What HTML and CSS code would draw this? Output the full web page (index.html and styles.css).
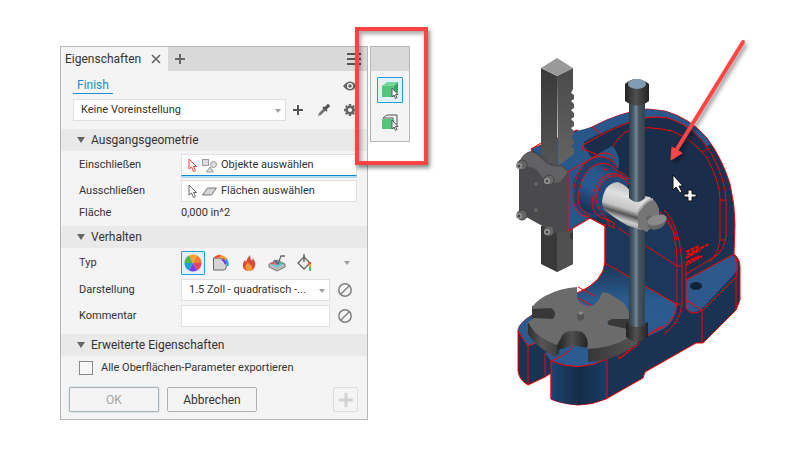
FILE: index.html
```html
<!DOCTYPE html>
<html lang="de">
<head>
  <meta charset="UTF-8">
  <meta name="viewport" content="width=device-width, initial-scale=1.0">
  <title>Eigenschaften</title>
  <link rel="stylesheet" href="styles.css">
</head>
<body>

  <main class="workspace">

    <form class="panel">
      <!-- Tab bar -->
      <div class="tabs">
        <div class="tab">
          <span>Eigenschaften</span>
          <button type="button" class="icon-btn" aria-label="Schließen">
            <svg width="10" height="10" viewBox="0 0 10 10"><path d="M1 1l8 8M9 1L1 9" stroke="#666" stroke-width="1.7"/></svg>
          </button>
        </div>
        <button type="button" class="icon-btn tab-add" aria-label="Neu">
          <svg width="10" height="10" viewBox="0 0 10 10"><path d="M5 0v10M0 5h10" stroke="#666" stroke-width="2"/></svg>
        </button>
        <button type="button" class="icon-btn tab-menu" aria-label="Menü">
          <svg width="14" height="12" viewBox="0 0 14 12"><path d="M0 1h14M0 6h14M0 11h14" stroke="#555" stroke-width="2"/></svg>
        </button>
      </div>

      <div class="crumbs">
        <a href="#" class="crumb">Finish</a>
        <button type="button" class="icon-btn" aria-label="Sichtbarkeit">
          <svg width="14" height="10" viewBox="0 0 14 10"><path d="M0 5Q7-4 14 5Q7 14 0 5Z" fill="#666"/><circle cx="7" cy="5" r="3" fill="#f4f4f4"/><circle cx="7" cy="5" r="1.8" fill="#666"/></svg>
        </button>
      </div>

      <div class="preset">
        <div class="select-box">
          <select aria-label="Voreinstellung"><option>Keine Voreinstellung</option></select>
        </div>
        <button type="button" class="icon-btn" aria-label="Voreinstellung hinzufügen">
          <svg width="10" height="10" viewBox="0 0 10 10"><path d="M5 0v10M0 5h10" stroke="#555" stroke-width="2"/></svg>
        </button>
        <button type="button" class="icon-btn" aria-label="Pipette">
          <svg width="13" height="13" viewBox="0 0 13 13"><path d="M1 12l1-3 5-5 2 2-5 5z" fill="#777"/><path d="M6 3l4 4M8 4l3-3 1 1-3 3z" stroke="#555" stroke-width="1.8"/></svg>
        </button>
        <button type="button" class="icon-btn" aria-label="Einstellungen">
          <svg width="12" height="12" viewBox="0 0 12 12"><circle cx="6" cy="6" r="3.3" fill="none" stroke="#666" stroke-width="2.4"/><path d="M6 0v2M6 10v2M0 6h2M10 6h2M1.8 1.8l1.4 1.4M8.8 8.8l1.4 1.4M1.8 10.2l1.4-1.4M8.8 3.2l1.4-1.4" stroke="#666" stroke-width="2.4"/></svg>
        </button>
      </div>

      <!-- Ausgangsgeometrie -->
      <h2 class="section">Ausgangsgeometrie</h2>
      <div class="rows geometry">
        <div class="row">
          <label for="include">Einschließen</label>
          <button type="button" id="include" class="picker active">
            <svg width="30" height="15" viewBox="0 0 30 15">
              <path d="M2 1v10l2.500-2 2 4.500 2-1-2-4h3z" fill="#fff" stroke="#e8413c"/>
              <rect x="15.500" y="1.500" width="6" height="6" fill="#ddd" stroke="#999"/><circle cx="26.500" cy="6.500" r="3" fill="#ddd" stroke="#999"/><path d="M19.500 14l3.500-5 3.500 5z" fill="#ddd" stroke="#999"/>
            </svg>
            <span>Objekte auswählen</span>
          </button>
        </div>
        <div class="row">
          <label for="exclude">Ausschließen</label>
          <button type="button" id="exclude" class="picker">
            <svg width="30" height="15" viewBox="0 0 30 15">
              <path d="M2 1v10l2.500-2 2 4.500 2-1-2-4h3z" fill="#fff" stroke="#666"/>
              <path d="M15.500 11l5-7h9l-5 7z" fill="#d5d5d5" stroke="#777"/>
            </svg>
            <span>Flächen auswählen</span>
          </button>
        </div>
        <div class="row">
          <span>Fläche</span>
          <output>0,000 in^2</output>
        </div>
      </div>

      <!-- Verhalten -->
      <h2 class="section">Verhalten</h2>
      <div class="rows behavior">
        <div class="row">
          <span>Typ</span>
          <div class="types">
            <button type="button" class="type selected" aria-label="Darstellung">
              <svg width="18" height="18" viewBox="0 0 18 18">
                <path d="M9 9L5 1.500A8.500 8.500 0 0 1 13 1.500Z" fill="#f9a32b"/>
                <path d="M9 9L13 1.500A8.500 8.500 0 0 1 17.500 9Z" fill="#f07e32"/>
                <path d="M9 9H17.500A8.500 8.500 0 0 1 13 16.500Z" fill="#e8475a"/>
                <path d="M9 9L13 16.500A8.500 8.500 0 0 1 5 16.500Z" fill="#7440e8"/>
                <path d="M9 9L5 16.500A8.500 8.500 0 0 1 .5 9Z" fill="#17a5c8"/>
                <path d="M9 9H.5A8.500 8.500 0 0 1 5 1.500Z" fill="#56b450"/>
              </svg>
            </button>
            <button type="button" class="type" aria-label="Beschichtung">
              <svg width="18" height="18" viewBox="0 0 18 18">
                <path d="M1.500 4h5q7 1 8 9l-2 3h-11z" fill="#d5d5d5" stroke="#666"/>
                <path d="M3 4Q5 1.500 9 2" fill="none" stroke="#e84b3c" stroke-width="2.500"/><path d="M8 2.500Q12 3 14 6" fill="none" stroke="#f59a23" stroke-width="3"/><path d="M10 5q3 2 4 5" fill="none" stroke="#7440e8" stroke-width="2.500"/><path d="M14 5q2 3 2 7" fill="none" stroke="#22a8c8" stroke-width="2"/>
              </svg>
            </button>
            <button type="button" class="type" aria-label="Wärmebehandlung">
              <svg width="18" height="18" viewBox="0 0 18 18">
                <path d="M8 17Q2 16 3 10Q3 8 5 6L6 8Q7 4 10 1Q10 5 12 7L13 4Q16 9 15 12Q14 17 8 17Z" fill="#dd4a38"/>
                <path d="M8 17Q4 15 6 11L8 8Q9 11 11 11Q14 15 10 17Z" fill="#f79a35"/>
              </svg>
            </button>
            <button type="button" class="type" aria-label="Bearbeitung">
              <svg width="18" height="18" viewBox="0 0 18 18">
                <path d="M1 10l8-4 8 4v3l-8 4-8-4z" fill="#b9b9b9" stroke="#777"/>
                <path d="M2 10l4-2 3 3z" fill="#e5554e"/><path d="M6 8l3-1.500 1 4z" fill="#7640e8"/><path d="M9 7l7 3-6 1z" fill="#41bfa0"/><path d="M2 10l7 3.500 7-3.500-7 1z" fill="#65c6e8"/>
                <path d="M6 6l4 4 3-8h4" fill="none" stroke="#666" stroke-width="1.300"/>
              </svg>
            </button>
            <button type="button" class="type" aria-label="Farbe">
              <svg width="18" height="18" viewBox="0 0 18 18">
                <path d="M2 9l6-6 6 6-6 6z" fill="#eee" stroke="#666" stroke-width="1.300"/><path d="M8 0v8" stroke="#555" stroke-width="1.300"/>
                <path d="M12 8l3 0v3h-2z" fill="#ef493c"/><path d="M13 10h2v3h-2z" fill="#f3a52b"/><path d="M13 13h2v4h-2z" fill="#4dc574"/>
              </svg>
            </button>
            <i class="arrow"></i>
          </div>
        </div>
        <div class="row">
          <label for="look">Darstellung</label>
          <div class="field">
            <div class="select-box">
              <select id="look"><option>1.5 Zoll - quadratisch -...</option></select>
            </div>
            <button type="button" class="icon-btn" aria-label="Darstellung zurücksetzen">
              <svg width="14" height="14" viewBox="0 0 14 14"><circle cx="7" cy="7" r="6.200" fill="none" stroke="#808080" stroke-width="1.500"/><path d="M3 11l8-8" stroke="#808080" stroke-width="1.500"/></svg>
            </button>
          </div>
        </div>
        <div class="row">
          <label for="comment">Kommentar</label>
          <div class="field">
            <input type="text" id="comment" class="text">
            <button type="button" class="icon-btn" aria-label="Kommentar löschen">
              <svg width="14" height="14" viewBox="0 0 14 14"><circle cx="7" cy="7" r="6.200" fill="none" stroke="#808080" stroke-width="1.500"/><path d="M3 11l8-8" stroke="#808080" stroke-width="1.500"/></svg>
            </button>
          </div>
        </div>
      </div>

      <!-- Erweiterte Eigenschaften -->
      <h2 class="section">Erweiterte Eigenschaften</h2>
      <label class="check">
        <input type="checkbox">
        <span>Alle Oberflächen-Parameter exportieren</span>
      </label>

      <div class="actions">
        <button type="submit" class="btn btn-ok" disabled>OK</button>
        <button type="button" class="btn">Abbrechen</button>
        <button type="button" class="btn btn-plus" aria-label="Anwenden" disabled>
          <svg width="16" height="16" viewBox="0 0 16 16"><path d="M8 1v14M1 8h14" stroke="#d2d2d2" stroke-width="3"/></svg>
        </button>
      </div>
    </form>

    <!-- Selection mode bar -->
    <div class="modes">
      <div class="modes-head"></div>
      <button type="button" class="mode selected" aria-label="Körper">
        <svg width="18" height="18" viewBox="0 0 18 18">
          <path d="M1 5l5-4h11l-4 4z" fill="#75d898"/><path d="M13 5l4-4v10l-4 5z" fill="#35a565"/><rect x="1" y="5" width="12" height="11" fill="#55c57e"/>
          <path d="M11 7v9l2-2 1.500 3.500 1.500-1-1.500-3H17z" fill="#fff" stroke="#555"/>
        </svg>
      </button>
      <button type="button" class="mode" aria-label="Fläche">
        <svg width="18" height="18" viewBox="0 0 18 18">
          <path d="M2 5l4-3h10v10l-4 4V5z" fill="#eee" stroke="#555"/><rect x="1" y="6" width="12" height="10" fill="#55c57e"/>
          <path d="M11 7v9l2-2 1.500 3.500 1.500-1-1.500-3H17z" fill="#fff" stroke="#555"/>
        </svg>
      </button>
      <div class="callout"></div>
    </div>

    <!-- Arbor press model -->
    <div class="viewport">
      <svg class="model" viewBox="500 30 260 390" role="img" aria-label="Dornpresse">
        <defs>
          <linearGradient id="rod"><stop offset="0" stop-color="#303e49"/><stop offset=".3" stop-color="#4c6070"/><stop offset=".45" stop-color="#74899a"/><stop offset=".6" stop-color="#465560"/><stop offset="1" stop-color="#34424d"/></linearGradient>
          <linearGradient id="knob"><stop offset="0" stop-color="#222"/><stop offset=".45" stop-color="#505050"/><stop offset="1" stop-color="#242424"/></linearGradient>
          <linearGradient id="chrome" x1=".65" y1=".1" x2=".35" y2="1"><stop offset="0" stop-color="#bbb"/><stop offset=".25" stop-color="#e0e0e0"/><stop offset=".5" stop-color="#c4c4c4"/><stop offset=".62" stop-color="#555"/><stop offset=".75" stop-color="#ccc"/><stop offset="1" stop-color="#555"/></linearGradient>
          <linearGradient id="rackL" x2="0" y2="1"><stop offset="0" stop-color="#393939"/><stop offset="1" stop-color="#555"/></linearGradient>
          <linearGradient id="rackR" x2="0" y2="1"><stop offset="0" stop-color="#4a4a4a"/><stop offset="1" stop-color="#646464"/></linearGradient>
          <linearGradient id="boss" x1=".1" y1="1" x2=".7" y2="0"><stop offset="0" stop-color="#142c4c"/><stop offset=".45" stop-color="#285a92"/><stop offset=".75" stop-color="#285688"/><stop offset="1" stop-color="#1a3860"/></linearGradient>
          <linearGradient id="foot"><stop offset="0" stop-color="#1d4474"/><stop offset=".5" stop-color="#152b46"/><stop offset="1" stop-color="#1b3d66"/></linearGradient>
          <linearGradient id="web" x2="0" y2="1"><stop offset="0" stop-color="#1a3555"/><stop offset=".35" stop-color="#2b5a8e"/><stop offset="1" stop-color="#2b5b90"/></linearGradient>
          <linearGradient id="side"><stop offset="0" stop-color="#2e2e2e"/><stop offset=".12" stop-color="#555"/><stop offset=".25" stop-color="#444"/><stop offset=".28" stop-color="#2c2c2c"/><stop offset=".4" stop-color="#555"/><stop offset=".52" stop-color="#333"/><stop offset=".6" stop-color="#3a3a3a"/><stop offset="1" stop-color="#555"/></linearGradient>
          <filter id="shadow" x="-20%" y="-20%" width="150%" height="150%"><feDropShadow dx="2" dy="3" stdDeviation="2" flood-opacity=".45"/></filter>
        </defs>

        <!-- Casting silhouette -->
        <path d="M531 149L577 130L580 132L592 127Q620 112 647 109L665 111Q690 118 707 138Q722 158 730 184Q735 205 735 225L734 254Q740 259 740 267V300L736 310L703 343L696 343L645 372L643 378L606 399Q592 405 578 405Q558 403 551 399V373L545 377L528 385Q519 380 518 371V330Q519 323 532 315L577 293Q605 281 605 262V226L590 218L568 231Z" fill="#1a3352" stroke="#f00"/>
        <!-- Rim and dome face -->
        <path d="M531 149L577 131L592 127Q620 112 647 109L665 111Q695 121 711 144L703 148Q690 125 668 118Q640 112 583 142L615 160L568 173Z" fill="#2a5789"/>
        <path d="M583 145Q630 113 668 119Q695 126 711 153Q726 180 726 202V236Q725 250 712 258L686 274V266Q683 230 662 212L600 170Z" fill="#1a2d4a"/>
        <g fill="none" stroke="#f00">
          <path d="M592 127L602 134M583 145Q607 130 632 121Q650 115 668 118Q695 126 711 153Q726 180 726 202V236Q725 248 716 256L686 274"/>
          <path d="M611 150Q619 134 630 130Q646 125 672 131Q694 140 707 158Q720 182 720 200V238Q719 252 710 262M720 200h6M720 240h6M703 152l5-4"/>
        </g>

        <!-- Web between column and base -->
        <path d="M605 222L620 221L658 211Q677 224 678 266V304L605 263Z" fill="#1b3759"/>
        <path d="M605 263L677 304Q676 325 657 332L607 358Q580 374 551 360L555 352Q574 343 572 334L528 346L518 331Q518 323 532 315L577 293Q603 282 605 263Z" fill="url(#web)"/>
        <path d="M686 280L733 255Q739 260 738 270L703 308Q692 316 686 308Z" fill="#2c588b"/>
        <ellipse cx="696" cy="286" rx="6" ry="4" fill="#102238"/>
        <path d="M551 361Q579 374 607 358V398Q578 411 551 399Z" fill="url(#foot)"/>
        <path d="M545 353L572 339Q575 350 551 361V373L545 376Z" fill="#2b5a8e"/>
        <path d="M545 353L551 361V373L545 376Z" fill="#173458"/>
        <g fill="none" stroke="#f00">
          <path d="M605 224V262Q604 281 578 293M605 263L678 305M618 228L677 266M660 212Q677 222 677 266V304Q674 325 657 330L619 351V359L640 343"/>
          <path d="M664 210Q680 225 682 266V304Q680 323 664 334M656 212Q674 226 677 240M677 266h5M677 304h5"/>
          <path d="M686 280L734 254Q739 262 736 277L703 310Q691 317 686 308M686 262V308M686 300l16 10v33M736 277v33"/>
          <path d="M551 361V399M607 360V398M528 346V385M545 353V376M518 331L528 346L537 342M551 361Q579 373 607 359L640 340L662 326M578 287l17 9M578 298l16 9M573 343Q574 352 551 361"/>
          <path d="M619 359L638 342M619 353L636 341"/>
        </g>
        <g stroke="#f00" stroke-width="2">
          <path d="M686 252l13-6M687 255l22-11M686 258l14-8" stroke-dasharray="4 1"/><path d="M686 265l16-9M687 262l12-6" stroke-dasharray="3 1"/>
        </g>

        <!-- Index plate -->
        <path d="M528 322V334Q535 346 555 357L559 353Q559 340 573 336Q588 340 588 348V362Q614 361 637 344V326Z" fill="url(#side)"/>
        <path d="M532 306L553 304L560 313L554 320L532 320ZM608 316H630V330H608Z" fill="#383838"/>
        <path d="M558 350Q560 335 573 331Q588 331 588 342V348Q572 344 565 348Z" fill="url(#knob)"/>
        <path d="M577 287V298Q581 306 590 306Q598 305 602 293Q605 290 618 299Q627 304 629 313V319L612 319Q604 322 609 325L628 329V338Q612 348 587 349Q590 338 582 332Q564 328 561 338L557 345Q535 337 528 322L534 318L553 319Q558 312 551 308L532 309Q533 303 545 296Q560 288 577 287Z" fill="#6b6b6c"/>
        <path d="M577 313l4-2 3 2v6l-4 2-3-2z" fill="#555"/><path d="M577 313l4-2 3 2-3 2z" fill="#888"/>

        <!-- Rack -->
        <path d="M541 226h32v38l-16 8-16-8z" fill="#393939"/><path d="M557 228h16v4l-3 2v4l3 2v24l-16 8z" fill="#505050"/>
        <path d="M541 68l16 8v89l-16-4z" fill="url(#rackL)"/>
        <path d="M568 171L612 146Q620 153 619 166L588 219L568 231Z" fill="#285687"/>
        <path d="M557 76l16-8V89l-2 4 3 2v4l-3 2 3 3v4l-3 2 3 3v4l-3 2 3 3v4l-3 2 3 3v4l-3 2 3 3v4l-3 2 3 3v5l-16 12z" fill="url(#rackR)"/>
        <path d="M557 58l16 10-16 8-16-8z" fill="#999"/>

        <!-- Shaft boss -->
        <path d="M573 183Q581 160 598 157Q615 155 618 170L610 215L592 218Q570 214 573 183Z" fill="#1d406c"/>
        <path d="M578 200Q578 180 590 168Q603 158 617 171L629 179L602 213Q582 216 578 200Z" fill="url(#boss)"/>
        <path d="M596 199Q600 176 615 175Q624 174 630 183L606 212Q595 210 596 199Z" fill="#214a7b"/>
        <g fill="none" stroke="#f00">
          <path d="M531 149l10-6M566 173L592 158Q606 147 616 159M583 145l-1 4 14 5M568 171v60l22-13 15 8"/>
          <path d="M588 217Q573 215 573 195Q574 176 585 163Q594 155 603 157Q614 159 617 168"/>
          <path d="M588 217V214Q578 210 578 198Q580 179 590 168Q605 157 617 171Q626 174 629 179"/>
          <path d="M608 220Q592 216 592 203Q593 188 602 178Q613 168 628 180M611 222Q597 212 596 199Q600 174 618 176Q625 178 629 184M608 220l6 3v5l-6-3zM604 169h3v1h-3z"/>
        </g>
        <path d="M602 202Q604 183 618 182Q627 185 632 194L650 197L656 206L640 232Q622 224 603 209Z" fill="url(#chrome)"/>
        <path d="M638 228V212Q646 200 653 199Q662 208 658 219L647 232Z" fill="#767676"/><path d="M638 212Q646 200 653 199" fill="none" stroke="#aaa" stroke-width="2"/>

        <!-- Mounting plate -->
        <path d="M519 164Q522 153 531 151L542 155L549 163L562 165L568 171V231L555 233L519 213Z" fill="#4a4a4d"/>
        <path d="M521 158Q528 150 535 153L546 163Q553 168 561 166L568 172L560 182Q549 184 543 178L536 169L520 164Z" fill="#626265"/>
        <g fill="#666" stroke="#444">
          <circle cx="522" cy="165" r="5"/><circle cx="549" cy="180" r="5"/><circle cx="522" cy="215" r="5"/><circle cx="549" cy="231" r="5"/><circle cx="536" cy="184" r="2.500"/><circle cx="536" cy="210" r="2.500"/>
        </g>
        <g fill="#999"><circle cx="519" cy="166" r="3"/><circle cx="547" cy="181" r="3"/><circle cx="519" cy="216" r="3"/><circle cx="547" cy="232" r="3"/></g>
        <g fill="#444"><circle cx="519" cy="166" r="1.500"/><circle cx="547" cy="181" r="1.500"/><circle cx="519" cy="216" r="1.500"/><circle cx="547" cy="232" r="1.500"/></g>

        <!-- Lever -->
        <path d="M629 95h16v103q-8 8-16 0zM629 226l16 5v98h-16z" fill="url(#rod)"/>
        <path d="M646 217q4-3 8 0l11-1q3 7-4 12q-9 4-13-1z" fill="#666"/><ellipse cx="657" cy="220" rx="10" ry="5" transform="rotate(-15 657 220)" fill="#8a8a8a"/>
        <path d="M625 84Q636 74 649 84V101Q637 110 625 101Z" fill="url(#knob)"/><ellipse cx="637" cy="84" rx="9" ry="5" fill="#829cb3"/>
        <path d="M626 322Q637 329 648 322V337Q637 346 626 337Z" fill="url(#knob)"/><path d="M629 318h16v7q-8 4-16 0z" fill="url(#rod)"/>

        <!-- Pointer and arrow -->
        <g filter="url(#shadow)"><path d="M743 42L677 149" stroke="#ff4444" stroke-width="4" stroke-linecap="round"/><path d="M671 160l1-13 10 6z" fill="#ff4444" stroke="#ff4444"/></g>
        <path d="M673 175v15l3-3 4 6 2-1-3-6h4z" fill="#fff" stroke="#111"/>
        <path d="M688 190h4v4h4v3h-4v4h-4v-4h-4v-3h4z" fill="#fff" stroke="#111"/>
      </svg>
    </div>

  </main>

</body>
</html>
```
FILE: styles.css
```css
* {
  box-sizing: border-box;
  margin: 0;
  padding: 0;
}
body {
  font-family: Roboto, "Noto Sans", sans-serif;
  font-size: 11px;
  line-height: 16px;
  color: #333;
  background-color: #fff;
}
button, input, select {
  font: inherit;
  color: inherit;
}
svg {
  display: block;
  flex: none;
}
.workspace {
  display: flex;
  align-items: flex-start;
  padding: 30px 40px 30px 60px;
}
.panel {
  flex: 0 1 308px;
  min-width: 290px;
  margin-top: 16px;
  background-color: #f4f4f4;
  border: 1px solid #b5b8b9;
}
.icon-btn {
  display: flex;
  align-items: center;
  justify-content: center;
  background: none;
  border: none;
}

/* Tabs */
.tabs {
  display: flex;
  height: 24px;
  background-color: #d9d9d9;
}
.tab {
  display: flex;
  align-items: center;
  gap: 10px;
  padding: 0 7px 0 4px;
  background-color: #f4f4f4;
  font-size: 12px;
}
.tab-add {
  padding: 0 7px;
}
.tab-menu {
  margin-left: auto;
  padding-right: 6px;
}

/* Preset */
.crumbs {
  display: flex;
  justify-content: space-between;
  align-items: center;
  padding: 6px 10px 5px 12px;
}
.crumb {
  padding: 0 4px;
  font-size: 12px;
  color: #1a8fc9;
  text-decoration: none;
  border-bottom: 1px solid #1a8fc9;
}
.preset {
  display: grid;
  grid-template-columns: 1fr 10px 13px 12px;
  gap: 0 14px;
  align-items: center;
  padding: 0 11px 8px 12px;
}
.preset .select-box {
  margin-right: -7px;
}
.select-box {
  position: relative;
  flex: 1;
  min-width: 0;
}
.select-box select, .text {
  display: block;
  width: 100%;
  height: 22px;
  padding: 0 7px;
  appearance: none;
  background-color: #fff;
  border: 1px solid #e0e0e0;
  border-radius: 0;
}
.select-box::after {
  content: "";
  position: absolute;
  right: 5px;
  top: 10px;
  border: 3px solid transparent;
  border-top: 4px solid #a0a0a0;
  border-bottom: none;
}

/* Sections */
.section {
  display: flex;
  align-items: center;
  gap: 6px;
  height: 22px;
  padding-left: 16px;
  background-color: #e9e9e9;
  font-size: 12px;
  font-weight: normal;
}
.section::before {
  content: "";
  border: 4px solid transparent;
  border-top: 6px solid #666;
  border-bottom: none;
}
.rows {
  display: grid;
}
.geometry {
  gap: 2px;
  padding: 3px 10px 4px 18px;
}
.behavior {
  gap: 4px;
  padding: 3px 10px 7px 18px;
}
.row {
  display: grid;
  grid-template-columns: 102px 1fr;
  align-items: center;
}
.picker {
  display: flex;
  align-items: center;
  gap: 4px;
  height: 22px;
  padding: 0 5px;
  background-color: #fff;
  border: 1px solid #e0e0e0;
}
.picker.active {
  border-bottom: 1px solid #0e8ad0;
  box-shadow: 0 2px 0 #b5daec;
}
.geometry .row:first-child {
  padding-bottom: 2px;
}
.geometry .row:last-child {
  height: 18px;
}
.types {
  display: flex;
  gap: 4px;
  align-items: center;
}
.type {
  display: flex;
  align-items: center;
  justify-content: center;
  width: 24px;
  height: 24px;
  background: none;
  border: none;
}
.type.selected, .mode.selected {
  background-color: #e2f0f7;
  border: 1px solid #209fd8;
  border-radius: 1px;
}
.arrow {
  margin: 0 7px 0 auto;
  border: 3px solid transparent;
  border-top: 4px solid #a0a0a0;
  border-bottom: none;
}
.field {
  display: flex;
  gap: 8px;
  padding-right: 5px;
}

/* Footer */
.check {
  display: flex;
  align-items: center;
  gap: 8px;
  padding: 4px 18px;
}
.check input {
  appearance: none;
  width: 14px;
  height: 14px;
  background-color: #f8f8f8;
  border: 1px solid #888;
}
.actions {
  display: flex;
  gap: 8px;
  padding: 7px 9px 7px 8px;
}
.btn {
  width: 90px;
  height: 25px;
  background-color: #f4f4f4;
  border: 1px solid #b0b0b0;
  border-radius: 2px;
  font-size: 12px;
}
.btn-ok {
  color: #a5a5a5;
  box-shadow: 0 0 0 1px #d9e9f1;
}
.btn-plus {
  display: flex;
  align-items: center;
  justify-content: center;
  width: 25px;
  margin-left: auto;
  border-color: #dcdcdc;
}

/* Mode bar */
.modes {
  position: relative;
  flex: none;
  display: flex;
  flex-direction: column;
  align-items: center;
  gap: 6px;
  width: 40px;
  margin: 16px 0 0 2px;
  padding-bottom: 6px;
  background-color: #f4f4f4;
  border: 1px solid #b5b8b9;
}
.modes-head {
  width: 100%;
  height: 24px;
  background-color: #d9d9d9;
}
.mode {
  display: flex;
  align-items: center;
  justify-content: center;
  width: 26px;
  height: 26px;
  background: none;
  border: none;
}
.callout {
  position: absolute;
  inset: -20px -19px -24px -16px;
  border: 4px solid #ff4343;
  box-shadow: 2px 3px 4px rgba(0, 0, 0, 0.45), inset 2px 3px 4px rgba(0, 0, 0, 0.35);
  pointer-events: none;
}
.viewport {
  flex: 1;
  display: flex;
  justify-content: flex-end;
}
.model {
  width: 100%;
  max-width: 260px;
}
```
